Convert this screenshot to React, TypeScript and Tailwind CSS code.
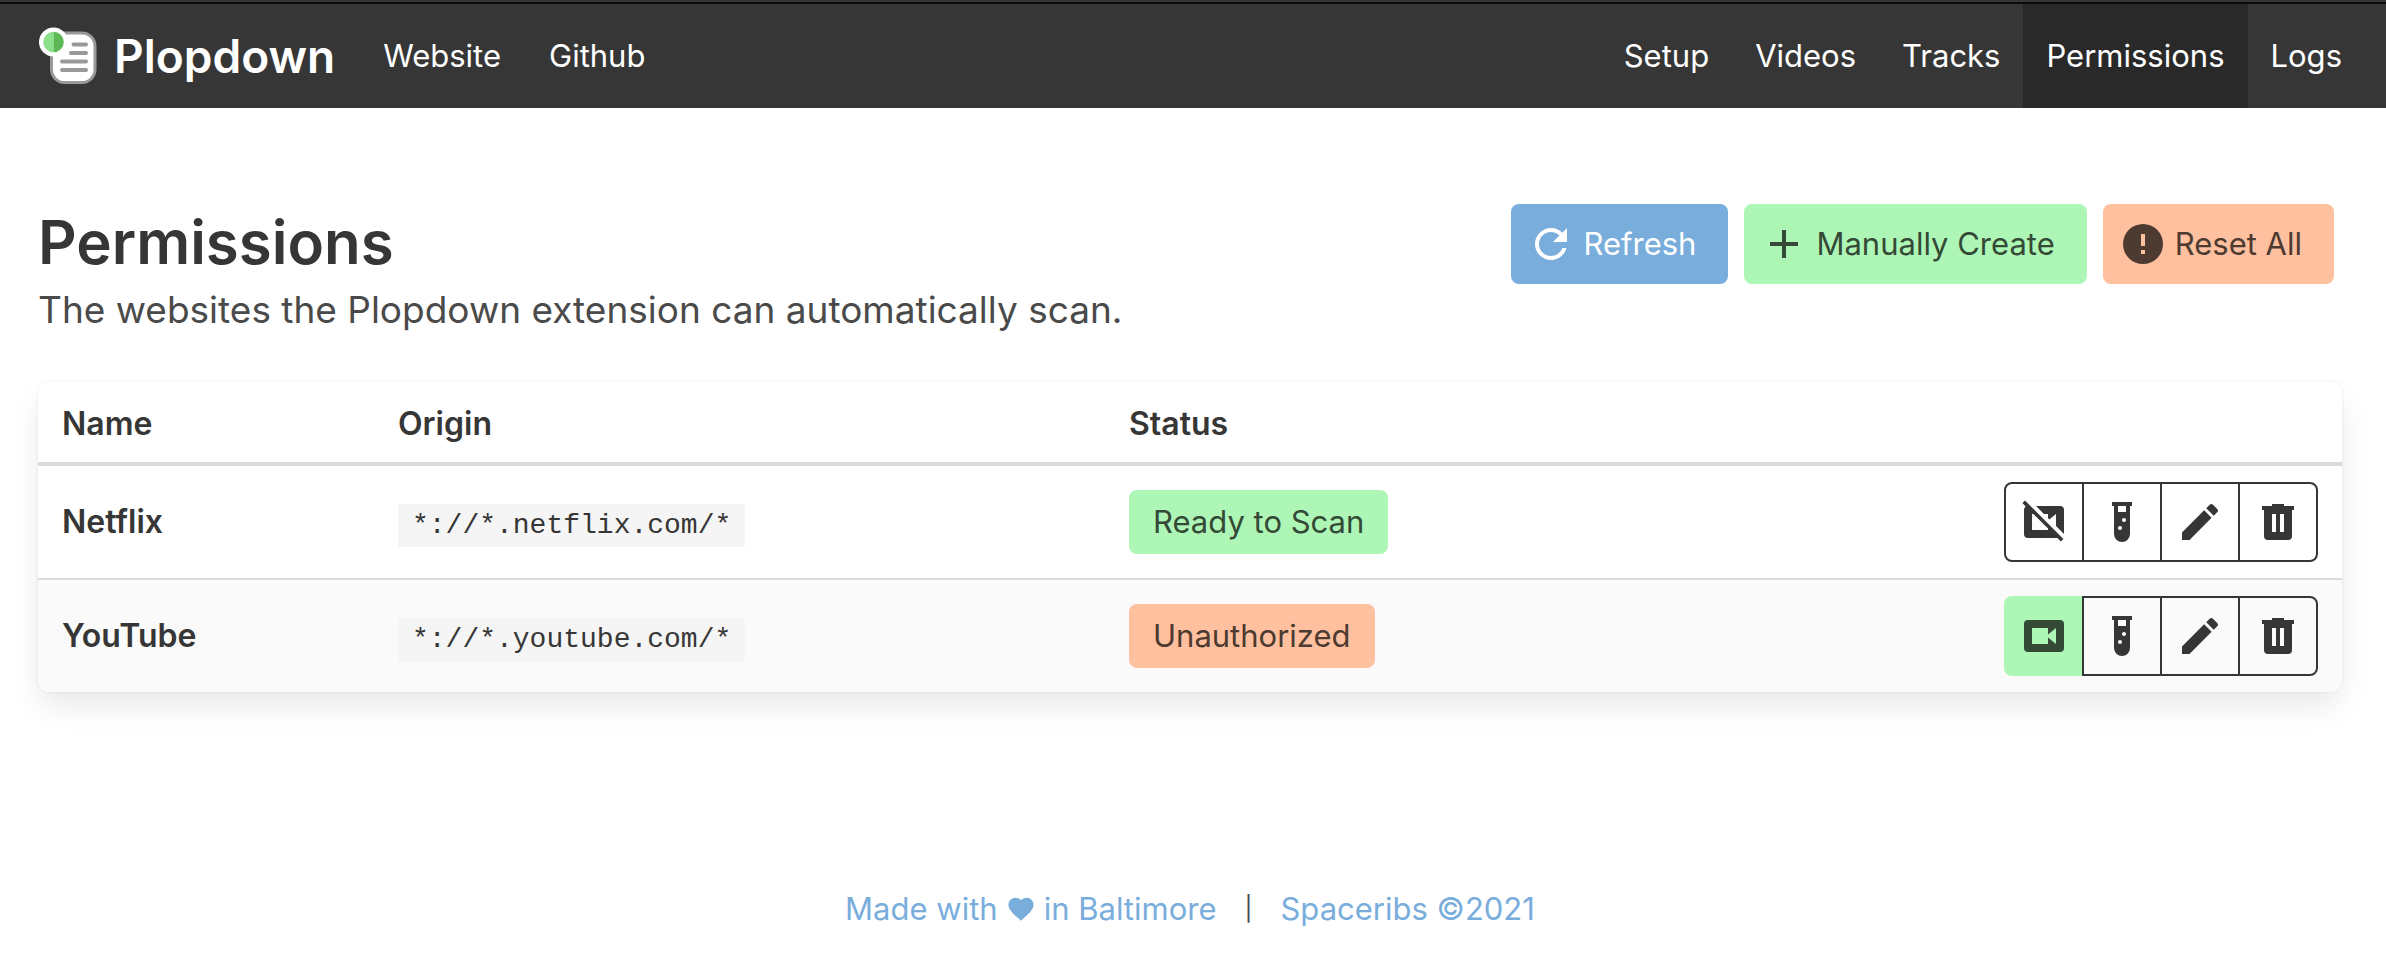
import React from "react";

type IconProps = { d: string; className?: string };

function Icon({ d, className = "size-12" }: IconProps) {
  return (
    <svg viewBox="0 0 24 24" fill="currentColor" aria-hidden="true" className={className}>
      <path d={d} />
    </svg>
  );
}

const icons = {
  refresh:
    "M17.65,6.35C16.2,4.9 14.21,4 12,4A8,8 0 0,0 4,12A8,8 0 0,0 12,20C15.73,20 18.84,17.45 19.73,14H17.65C16.83,16.33 14.61,18 12,18A6,6 0 0,1 6,12A6,6 0 0,1 12,6C13.66,6 15.14,6.69 16.22,7.78L13,11H20V4L17.65,6.35Z",
  plus: "M19,13H13V19H11V13H5V11H11V5H13V11H19V13Z",
  alert:
    "M13,13H11V7H13M13,17H11V15H13M12,2A10,10 0 0,0 2,12A10,10 0 0,0 12,22A10,10 0 0,0 22,12A10,10 0 0,0 12,2Z",
  video:
    "M18,16L14,12.8V16H6V8H14V11.2L18,8M20,4H4A2,2 0 0,0 2,6V18A2,2 0 0,0 4,20H20A2,2 0 0,0 22,18V6A2,2 0 0,0 20,4Z",
  videoOff:
    "M2.5,1.2L1.2,2.5L2.9,4.3C2.3,4.7 2,5.3 2,6V18A2,2 0 0,0 4,20H18.7L20.4,21.8L21.7,20.5ZM6,8H6.7L14,15.3V16H6ZM20,4H8L12,8H14V10L14.6,10.7L18,8V14L22,18V6A2,2 0 0,0 20,4Z",
  tube:
    "M7,2V4H8V18A4,4 0 0,0 12,22A4,4 0 0,0 16,18V4H17V2H7M11,16C10.4,16 10,15.6 10,15C10,14.4 10.4,14 11,14C11.6,14 12,14.4 12,15C12,15.6 11.6,16 11,16M13,12C12.4,12 12,11.6 12,11C12,10.4 12.4,10 13,10C13.6,10 14,10.4 14,11C14,11.6 13.6,12 13,12M14,7H10V4H14V7Z",
  pencil:
    "M20.71,7.04C21.1,6.65 21.1,6 20.71,5.63L18.37,3.29C18,2.9 17.35,2.9 16.96,3.29L15.12,5.12L18.87,8.87M3,17.25V21H6.75L17.81,9.93L14.06,6.18L3,17.25Z",
  trash:
    "M9,3V4H4V6H5V19A2,2 0 0,0 7,21H17A2,2 0 0,0 19,19V6H20V4H15V3H9M9,8H11V17H9V8M13,8H15V17H13V8Z",
  heart:
    "M12,21.35L10.55,20.03C5.4,15.36 2,12.27 2,8.5C2,5.41 4.42,3 7.5,3C9.24,3 10.91,3.81 12,5.08C13.09,3.81 14.76,3 16.5,3C19.58,3 22,5.41 22,8.5C22,12.27 18.6,15.36 13.45,20.03L12,21.35Z",
};

function Logo() {
  return (
    <svg viewBox="0 0 60 60" aria-hidden="true" className="size-[60px]">
      <rect x="13.5" y="7" width="43.5" height="49.5" rx="13" fill="#fff" stroke="#999" strokeWidth="3" />
      <path
        d="M35.5 18.500H48M33 27H48M24 35.500H48M24 44H48"
        stroke="#999"
        strokeWidth="4"
        strokeLinecap="round"
      />
      <circle cx="15.500" cy="16" r="14.500" fill="#fff" />
      <path d="M15.500 5.700a10.300 10.300 0 0 0 0 20.600z" fill="#8be08b" />
      <path d="M15.500 5.700a10.300 10.300 0 0 1 0 20.600z" fill="#5cb755" />
    </svg>
  );
}

const brandLink = "flex items-center px-6 text-white";
const pageLink = "flex items-center px-[23px] text-white";

type Row = { name: string; origin: string; authorized: boolean };

const rows: Row[] = [
  { name: "Netflix", origin: "*://*.netflix.com/*", authorized: true },
  { name: "YouTube", origin: "*://*.youtube.com/*", authorized: false },
];

const action =
  "flex h-20 w-20 items-center justify-center border-2 border-[#363636] not-first:-ml-0.5 first:rounded-l-lg last:rounded-r-lg";

function Actions({ authorized }: { authorized: boolean }) {
  return (
    <div className="flex justify-end">
      {authorized ? (
        <button type="button" aria-label="Revoke access" className={action}>
          <Icon d={icons.videoOff} />
        </button>
      ) : (
        <button
          type="button"
          aria-label="Grant access"
          className="flex h-20 w-20 items-center justify-center rounded-l-lg bg-[#aef6b6] text-[#344a37]"
        >
          <Icon d={icons.video} />
        </button>
      )}
      <button type="button" aria-label="Test" className={action}>
        <Icon d={icons.tube} />
      </button>
      <button type="button" aria-label="Edit" className={action}>
        <Icon d={icons.pencil} />
      </button>
      <button type="button" aria-label="Delete" className={action}>
        <Icon d={icons.trash} />
      </button>
    </div>
  );
}

const headCell = "border-b-4 border-[#dbdbdb] px-6 pt-[18px] pb-3.5 font-semibold";
const cell = "border-[#dbdbdb] px-6 py-4 group-not-last:border-b-2";

export default function App() {
  return (
    <div className="bg-white font-['Inter',sans-serif] text-[31px] leading-[48px] text-[#4a4a4a]">
      <nav className="flex h-[108px] border-t-2 border-[#363636] bg-[#363636]">
        <div className="flex w-full justify-between border-t-2 border-[#0a0a0a] pr-[21px] pl-[38px]">
          <div className="flex">
            <a href="#home" className="flex items-center gap-4 pr-6 text-[46px] font-semibold text-white">
              <Logo />
              Plopdown
            </a>
            <a href="#website" className={brandLink}>Website</a>
            <a href="#github" className={brandLink}>Github</a>
          </div>
          <div className="flex">
            <a href="#setup" className={pageLink}>Setup</a>
            <a href="#videos" className={pageLink}>Videos</a>
            <a href="#tracks" className={pageLink}>Tracks</a>
            <a href="#permissions" aria-current="page" className="flex items-center bg-[#292929] px-[23px] text-white">
              Permissions
            </a>
            <a href="#logs" className={pageLink}>Logs</a>
          </div>
        </div>
      </nav>

      <main className="pt-24 pr-11 pl-[38px]">
        <header className="flex items-start justify-between pr-2">
          <div>
            <h1 className="text-[60px] leading-[76px] font-semibold text-[#363636]">Permissions</h1>
            <p className="text-[37px] leading-[60px]">
              The websites the Plopdown extension can automatically scan.
            </p>
          </div>
          <div className="flex gap-4">
            <button type="button" className="flex h-20 items-center gap-2 rounded-lg bg-[#79addc] pr-8 pl-4 text-white">
              <Icon d={icons.refresh} />
              Refresh
            </button>
            <button type="button" className="flex h-20 items-center gap-2 rounded-lg bg-[#aef6b6] pr-8 pl-4 text-[#344a37]">
              <Icon d={icons.plus} />
              Manually Create
            </button>
            <button type="button" className="flex h-20 items-center gap-2 rounded-lg bg-[#ffc09f] pr-8 pl-4 text-[#4d3a30]">
              <Icon d={icons.alert} />
              Reset All
            </button>
          </div>
        </header>

        <div className="mt-[42px] overflow-hidden rounded-xl shadow-[0_16px_32px_-4px_rgba(10,10,10,0.1),0_0_0_2px_rgba(10,10,10,0.02)]">
          <table className="w-full table-fixed border-separate border-spacing-0 text-left text-[#363636]">
            <colgroup>
              <col className="w-[336px]" />
              <col className="w-[731px]" />
              <col className="w-[700px]" />
              <col />
            </colgroup>
            <thead className="text-[32px]">
              <tr>
                <th className={headCell}>Name</th>
                <th className={headCell}>Origin</th>
                <th className={headCell}>Status</th>
                <th aria-label="Actions" className={headCell} />
              </tr>
            </thead>
            <tbody>
              {rows.map((row) => (
                <tr key={row.name} className="group even:bg-[#fafafa]">
                  <th scope="row" className={`${cell} text-[32px] font-semibold`}>{row.name}</th>
                  <td className={`${cell} pt-5`}>
                    <code className="bg-[#f5f5f5] px-3.5 py-1.5 font-['Liberation_Mono',monospace] text-[28px]">
                      {row.origin}
                    </code>
                  </td>
                  <td className={cell}>
                    <div className="flex">
                      <span
                        className={
                          row.authorized
                            ? "flex h-16 items-center rounded-lg bg-[#aef6b6] px-6 text-[#344a37]"
                            : "flex h-16 items-center rounded-lg bg-[#ffc09f] px-6 text-[#4d3a30]"
                        }
                      >
                        {row.authorized ? "Ready to Scan" : "Unauthorized"}
                      </span>
                    </div>
                  </td>
                  <td className={cell}>
                    <Actions authorized={row.authorized} />
                  </td>
                </tr>
              ))}
            </tbody>
          </table>
        </div>
      </main>

      <footer className="flex items-center justify-center gap-7 pt-[193px] pr-11 pb-10 pl-[38px] text-[#79addc]">
        <a href="#baltimore" className="flex items-center gap-2">
          Made with
          <Icon d={icons.heart} className="size-[30px]" />
          in Baltimore
        </a>
        <span className="text-2xl text-[#4a4a4a]">|</span>
        <a href="#spaceribs">Spaceribs ©2021</a>
      </footer>
    </div>
  );
}
